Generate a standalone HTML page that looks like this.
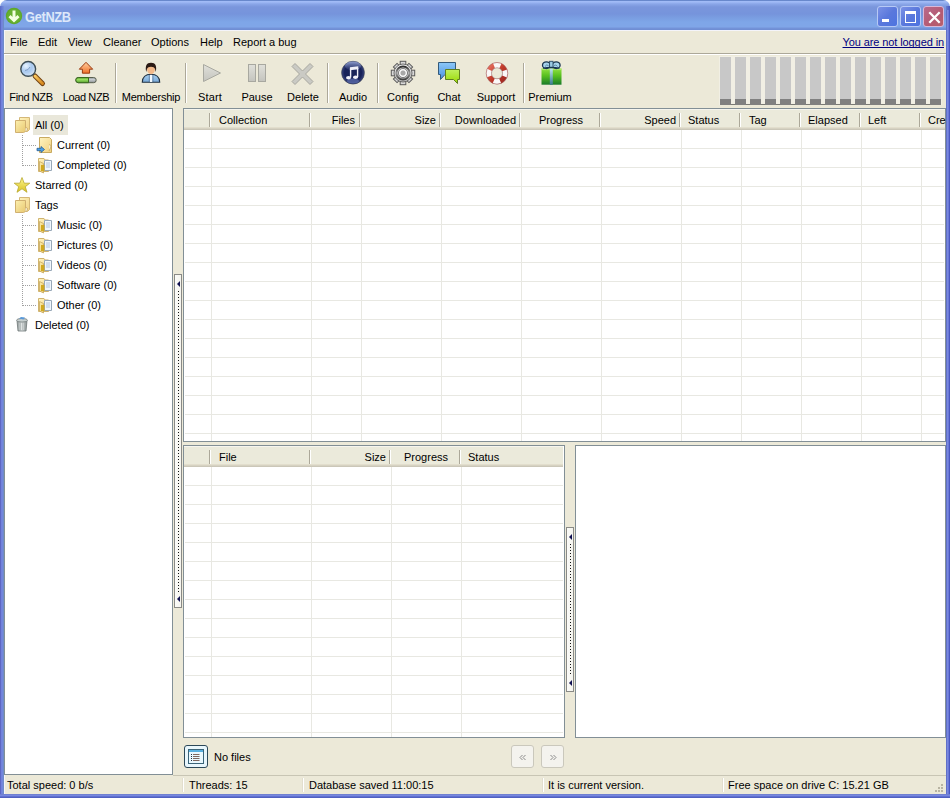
<!DOCTYPE html><html><head><meta charset="utf-8"><style>*{margin:0;padding:0;box-sizing:border-box}
html,body{width:950px;height:798px;overflow:hidden;background:#fff}
body{position:relative;font-family:"Liberation Sans",sans-serif;font-size:11px;color:#000}
.a{position:absolute}
.t{position:absolute;white-space:nowrap;line-height:13px;font-size:11px}
#title{left:0;top:0;width:950px;height:30px;border-radius:7px 7px 0 0;
background:linear-gradient(#6888cc 0px,#6888cc 1px,#a2bcf6 1px,#a0baf6 2px,#8aa6e8 4px,#7a96dc 7px,#7694dc 14px,#7a9ee2 18px,#7ea6e8 22px,#80a6e8 27px,#7494da 28px,#6e8cd2 30px)}
#frameL{left:0;top:10px;width:4px;height:788px;background:linear-gradient(90deg,#5e67c4 0,#5e67c4 1px,#7080dc 1px,#7488dc 3px,#6f8cc8 3px,#6f8cc8 4px)}
#frameR{left:946px;top:10px;width:4px;height:788px;background:linear-gradient(90deg,#6070c8 0,#6070c8 1px,#7888e0 1px,#7888e0 2px,#6a78d8 2px,#6a78d8 3px,#4a58c0 3px)}
#frameB{left:0;top:794px;width:950px;height:4px;background:linear-gradient(#7080d0 0,#7080d0 1px,#7888e0 1px,#7888e0 2px,#6070d0 2px,#6070d0 3px,#5060c0 3px)}
#client{left:4px;top:30px;width:942px;height:764px;background:#ece9d8;border-top:1px solid #f4f4fa;border-left:1px solid #f4f4fa}
.sep{position:absolute;width:2px;top:63px;height:40px;border-left:1px solid #aca899;border-right:1px solid #fff}
.panel{position:absolute;border:1px solid #828f96;background:#fff;overflow:hidden}
.hdr{position:absolute;left:0;top:0;height:21px;background:linear-gradient(#f6f5ee 0px,#f6f5ee 1px,#ebeadb 1px,#ebeadb 18px,#e2decd 18px,#e2decd 19px,#d6d2c2 19px,#d6d2c2 20px,#cbc7b8 20px)}
.hd{position:absolute;top:4px;width:2px;height:14px;border-left:1px solid #aca899;border-right:1px solid #fff}
.gl{position:absolute;width:1px;background:#e8e8e2}
.gh{position:absolute;height:1px;background:#e8e8e2}

.tb{width:21px;height:21px;border:1px solid #b7c9f5;border-radius:3px;background:linear-gradient(135deg,#7b92e6 0%,#5a78dc 50%,#4d74e0 100%)}
.tc{background:linear-gradient(135deg,#b86a8c 0%,#b55a72 60%,#b8606a 100%);border-color:#d9b8d8}
</style></head><body>
<div id="title" class="a"></div>
<div id="client" class="a"></div>
<svg class="a" style="left:5px;top:7px" width="18" height="18" viewBox="0 0 18 18"><circle cx="9" cy="9" r="8.2" fill="#5ea82a"/><circle cx="9" cy="9" r="7" fill="#66b030"/><path d="M9 3.5V13.5M4.5 9.2L9 13.5L13.5 9.2" stroke="#f2ffe0" stroke-width="3" fill="none" stroke-linecap="butt"/></svg>
<div class="a" style="left:946px;top:6px;width:4px;height:24px;background:linear-gradient(90deg,rgba(90,104,200,.55),rgba(64,80,184,.9))"></div>
<div class="a" style="left:0;top:6px;width:4px;height:24px;background:linear-gradient(90deg,rgba(80,96,196,.8),rgba(112,128,220,.3))"></div>
<div class="a" style="left:25px;top:9px;font:bold 14px/17px Liberation Sans,sans-serif;color:#dde8fa;letter-spacing:-0.3px;transform:scaleX(0.91);transform-origin:0 0">GetNZB</div>
<div class="a tb" style="left:877px;top:6px"><div class="a" style="left:4px;top:12px;width:7px;height:3px;background:#fff"></div></div>
<div class="a tb" style="left:900px;top:6px"><div class="a" style="left:4px;top:4px;width:11px;height:12px;border:1px solid #fff;border-top-width:3px"></div></div>
<div class="a tb tc" style="left:923px;top:6px"><svg class="a" style="left:0;top:0" width="21" height="21"><path d="M5.3 5.3L15.7 15.7M15.7 5.3L5.3 15.7" stroke="#fff" stroke-width="2.3"/></svg></div>
<div class="a" style="left:4px;top:53px;width:942px;height:1px;background:#aca899"></div>
<div class="a" style="left:4px;top:54px;width:942px;height:1px;background:#fff"></div>
<div class="t" style="left:10px;top:36px;">File</div>
<div class="t" style="left:38px;top:36px;">Edit</div>
<div class="t" style="left:68px;top:36px;">View</div>
<div class="t" style="left:103px;top:36px;">Cleaner</div>
<div class="t" style="left:151px;top:36px;">Options</div>
<div class="t" style="left:200px;top:36px;">Help</div>
<div class="t" style="left:233px;top:36px;">Report a bug</div>
<div class="t" style="left:744px;width:200px;text-align:right;top:36px;color:#000080;letter-spacing:-0.1px"><u style="text-decoration-skip-ink:none">You are not logged in</u></div>

<svg class="a" style="left:0;top:0" width="600" height="110" viewBox="0 0 600 110">
<defs>
<radialGradient id="lens" cx="0.35" cy="0.3" r="0.8"><stop offset="0" stop-color="#e8f4ff"/><stop offset="0.5" stop-color="#a9c9ef"/><stop offset="1" stop-color="#dbe9f8"/></radialGradient>
<linearGradient id="handle" x1="0" y1="0" x2="1" y2="1"><stop offset="0" stop-color="#f8c860"/><stop offset="1" stop-color="#d88a20"/></linearGradient>
<linearGradient id="arrow" x1="0" y1="0" x2="0" y2="1"><stop offset="0" stop-color="#ffd0a0"/><stop offset="1" stop-color="#f07028"/></linearGradient>
<linearGradient id="gbar" x1="0" y1="0" x2="0" y2="1"><stop offset="0" stop-color="#5aa030"/><stop offset="0.4" stop-color="#98e060"/><stop offset="1" stop-color="#58a030"/></linearGradient>
<linearGradient id="grbar" x1="0" y1="0" x2="0" y2="1"><stop offset="0" stop-color="#909898"/><stop offset="0.4" stop-color="#c8ccd0"/><stop offset="1" stop-color="#8a9090"/></linearGradient>
<linearGradient id="shirt" x1="0" y1="0" x2="0" y2="1"><stop offset="0" stop-color="#a8d0f0"/><stop offset="1" stop-color="#78a8d8"/></linearGradient>
<linearGradient id="dis" x1="0" y1="0" x2="0" y2="1"><stop offset="0" stop-color="#e0e0da"/><stop offset="1" stop-color="#c4c4be"/></linearGradient>
<radialGradient id="audio" cx="0.5" cy="0.5" r="0.5"><stop offset="0" stop-color="#1a2458"/><stop offset="0.75" stop-color="#18225a"/><stop offset="1" stop-color="#3a4680"/></radialGradient>
<linearGradient id="audhi" x1="0" y1="0" x2="0" y2="1"><stop offset="0" stop-color="#a0b0e0" stop-opacity="0.8"/><stop offset="1" stop-color="#a0b0e0" stop-opacity="0"/></linearGradient>
<linearGradient id="gring" x1="0" y1="0" x2="0" y2="1"><stop offset="0" stop-color="#303030"/><stop offset="0.5" stop-color="#9a9a9a"/><stop offset="1" stop-color="#404040"/></linearGradient>
<linearGradient id="gear" x1="0" y1="0" x2="0" y2="1"><stop offset="0" stop-color="#f4f4f4"/><stop offset="1" stop-color="#b8b8b8"/></linearGradient>
<linearGradient id="blueb" x1="0" y1="0" x2="0" y2="1"><stop offset="0" stop-color="#8cc8f8"/><stop offset="1" stop-color="#4a90e0"/></linearGradient>
<linearGradient id="greenb" x1="0" y1="0" x2="0" y2="1"><stop offset="0" stop-color="#c0f060"/><stop offset="1" stop-color="#98d800"/></linearGradient>
<linearGradient id="ribbon" x1="0" y1="0" x2="0" y2="1"><stop offset="0" stop-color="#c0e8f0"/><stop offset="1" stop-color="#3a7890"/></linearGradient>
<linearGradient id="buoy" x1="0" y1="0" x2="1" y2="1"><stop offset="0" stop-color="#e87060"/><stop offset="0.5" stop-color="#c03a2a"/><stop offset="1" stop-color="#a02820"/></linearGradient>
<linearGradient id="gift" x1="0" y1="0" x2="0" y2="1"><stop offset="0" stop-color="#90e040"/><stop offset="0.45" stop-color="#58c020"/><stop offset="1" stop-color="#1a7a2a"/></linearGradient>
</defs>
<!-- magnifier -->
<path d="M35 76L42.5 83.5" stroke="#704010" stroke-width="5" stroke-linecap="round"/>
<path d="M35 76L42.5 83.5" stroke="url(#handle)" stroke-width="3" stroke-linecap="round"/>
<circle cx="28.2" cy="68.9" r="7.4" fill="url(#lens)" stroke="#3e4e56" stroke-width="1.4"/>
<path d="M25 70.5Q28.5 70.5 30 67" stroke="#6c8cb8" stroke-width="0.8" fill="none"/>
<!-- load nzb -->
<path d="M86 62.3L92.7 69.2H89.6V73.2H82.4V69.2H79.3Z" fill="url(#arrow)" stroke="#9a3a10" stroke-width="1" stroke-linejoin="round"/>
<rect x="75.8" y="77.5" width="20.4" height="5.2" rx="2.6" fill="url(#grbar)" stroke="#5a6050" stroke-width="1"/>
<path d="M78.4 77.5H88.5V82.7H78.4A2.6 2.6 0 0 1 78.4 77.5Z" fill="url(#gbar)" stroke="#3a6a20" stroke-width="1"/>
<!-- membership -->
<path d="M142.3 82.3C142.5 77 146 74.3 151 74.3S159.5 77 159.7 82.3Z" fill="url(#shirt)" stroke="#203040" stroke-width="1.1"/>
<rect x="149.8" y="75" width="2.6" height="7" fill="#f0f8ff"/>
<path d="M149.3 74.5V82.3M152.9 74.5V82.3" stroke="#3a5878" stroke-width="0.6"/>
<ellipse cx="151" cy="69.6" rx="3.9" ry="4.6" fill="#f2b98a"/>
<path d="M146.2 72C145 66 146.5 62.8 151 62.8S157 66 155.8 72L155 69C154.5 67.5 153 67 151 66.8C149 67 147.5 67.5 147 69Z" fill="#2a1a14"/>
<!-- start -->
<path d="M203.5 64.5V81.5L220.5 73Z" fill="url(#dis)" stroke="#a8a8a0" stroke-width="1" stroke-linejoin="round"/>
<!-- pause -->
<rect x="248.5" y="64.5" width="7" height="17" fill="url(#dis)" stroke="#a8a8a0"/>
<rect x="258.5" y="64.5" width="7" height="17" fill="url(#dis)" stroke="#a8a8a0"/>
<!-- delete -->
<path d="M295 63.5L302.5 71L310 63.5L313 66.5L305.5 74L313 81.5L310 84.5L302.5 77L295 84.5L292 81.5L299.5 74L292 66.5Z" fill="#cacac4" stroke="#a8a8a0" stroke-width="1" stroke-linejoin="round"/>
<!-- audio -->
<circle cx="353" cy="72.7" r="11.4" fill="url(#audio)" stroke="#303848" stroke-width="0.6"/>
<ellipse cx="353" cy="66" rx="8" ry="4.5" fill="url(#audhi)"/>
<ellipse cx="353" cy="81" rx="6" ry="2.5" fill="#6070b0" opacity="0.7"/>
<path d="M350.6 77.5V68.5M357.6 77V68" stroke="#f0f0f8" stroke-width="1.4" fill="none"/>
<path d="M349.9 67.3L358.3 66.3V69.2L349.9 70.2Z" fill="#f0f0f8"/>
<ellipse cx="348.5" cy="77.7" rx="2.5" ry="1.8" fill="#f0f0f8"/>
<ellipse cx="355.5" cy="77.2" rx="2.5" ry="1.8" fill="#f0f0f8"/>
<!-- config gear -->
<g transform="translate(403 73)">
<g fill="#d8d8d8" stroke="#5a5a5a" stroke-width="1">
<rect x="-2.8" y="-11.7" width="5.6" height="5" />
<rect x="-2.8" y="6.7" width="5.6" height="5" />
<rect x="-11.7" y="-2.8" width="5" height="5.6" />
<rect x="6.7" y="-2.8" width="5" height="5.6" />
<rect x="-2.6" y="-11" width="5.2" height="4.5" transform="rotate(45)"/>
<rect x="-2.6" y="-11" width="5.2" height="4.5" transform="rotate(135)"/>
<rect x="-2.6" y="-11" width="5.2" height="4.5" transform="rotate(225)"/>
<rect x="-2.6" y="-11" width="5.2" height="4.5" transform="rotate(315)"/>
</g>
<circle r="9" fill="url(#gear)" stroke="#5e5e5e" stroke-width="0.9"/>
<circle r="6.6" fill="none" stroke="url(#gring)" stroke-width="2"/>
<circle r="4.6" fill="#e4e4e4" stroke="#6a6a6a" stroke-width="0.8"/>
<circle r="3.3" fill="none" stroke="#ffffff" stroke-width="1"/>
<circle r="2.5" fill="#a8a8a8"/>
</g>
<!-- chat -->
<path d="M438.5 62.5H455.5V74.5H445L440.5 79.5V74.5H438.5Z" fill="url(#blueb)" stroke="#345a7a" stroke-width="1" stroke-linejoin="round"/>
<path d="M445.5 69.5H459.5V79.5H457.5V83.5L453.5 79.5H445.5Z" fill="url(#greenb)" stroke="#5e7e1e" stroke-width="1" stroke-linejoin="round"/>
<!-- support -->
<g transform="translate(497 73.3)">
<circle r="8.2" fill="none" stroke="url(#buoy)" stroke-width="5.3"/>
<circle r="8.2" fill="none" stroke="#fbf8f8" stroke-width="5.3" stroke-dasharray="6.6 6.28" stroke-dashoffset="3.3"/>
<circle r="10.8" fill="none" stroke="#a06060" stroke-width="0.8" opacity="0.75"/>
<circle r="5.5" fill="none" stroke="#a09090" stroke-width="0.8" opacity="0.8"/>
</g>
<!-- premium gift -->
<rect x="541.5" y="68.5" width="20" height="16.2" fill="url(#gift)"/>
<rect x="541.5" y="68.5" width="20" height="1.6" fill="#b0ec70" opacity="0.8"/>
<rect x="549.8" y="68.5" width="3" height="16.2" fill="url(#ribbon)"/>
<ellipse cx="546.4" cy="65.2" rx="3.9" ry="3.3" fill="#a8d4ec" stroke="#1a3650" stroke-width="1.3"/>
<ellipse cx="556.2" cy="65.2" rx="3.9" ry="3.3" fill="#a8d4ec" stroke="#1a3650" stroke-width="1.3"/>
<path d="M545 66.5Q546.5 64 548.5 65.5M557.6 66.5Q556 64 554 65.5" stroke="#4a7a98" stroke-width="0.8" fill="none"/>
<rect x="549.6" y="61.3" width="3.4" height="6.5" fill="#9ccce4" stroke="#2a4a64" stroke-width="0.9"/>
<path d="M543 68.2Q551.3 66.5 559.5 68.2" stroke="#1a3650" stroke-width="1.1" fill="none"/>
</svg>

<div class="sep" style="left:115px"></div>
<div class="sep" style="left:185px"></div>
<div class="sep" style="left:327px"></div>
<div class="sep" style="left:377px"></div>
<div class="sep" style="left:523px"></div>
<div class="t" style="left:-29px;width:120px;text-align:center;top:91px;letter-spacing:-0.4px">Find NZB</div>
<div class="t" style="left:26px;width:120px;text-align:center;top:91px;letter-spacing:-0.4px">Load NZB</div>
<div class="t" style="left:91px;width:120px;text-align:center;top:91px;letter-spacing:-0.2px">Membership</div>
<div class="t" style="left:150px;width:120px;text-align:center;top:91px;letter-spacing:0.2px">Start</div>
<div class="t" style="left:197px;width:120px;text-align:center;top:91px;letter-spacing:0px">Pause</div>
<div class="t" style="left:243px;width:120px;text-align:center;top:91px;letter-spacing:0px">Delete</div>
<div class="t" style="left:293px;width:120px;text-align:center;top:91px;letter-spacing:0px">Audio</div>
<div class="t" style="left:343px;width:120px;text-align:center;top:91px;letter-spacing:0px">Config</div>
<div class="t" style="left:389px;width:120px;text-align:center;top:91px;letter-spacing:0px">Chat</div>
<div class="t" style="left:436px;width:120px;text-align:center;top:91px;letter-spacing:0px">Support</div>
<div class="t" style="left:490px;width:120px;text-align:center;top:91px;letter-spacing:-0.1px">Premium</div>
<div class="a" style="left:719px;top:56px;width:223px;height:49px;background:#f1efe4"></div>
<div class="a" style="left:720px;top:104px;width:221px;height:1px;background:#7a7a74"></div>
<div class="a" style="left:720px;top:57px;width:11px;height:42px;background:#c8c8c8"></div>
<div class="a" style="left:720px;top:99px;width:11px;height:6px;background:#808080"></div>
<div class="a" style="left:735px;top:57px;width:11px;height:42px;background:#c8c8c8"></div>
<div class="a" style="left:735px;top:99px;width:11px;height:6px;background:#808080"></div>
<div class="a" style="left:750px;top:57px;width:11px;height:42px;background:#c8c8c8"></div>
<div class="a" style="left:750px;top:99px;width:11px;height:6px;background:#808080"></div>
<div class="a" style="left:765px;top:57px;width:11px;height:42px;background:#c8c8c8"></div>
<div class="a" style="left:765px;top:99px;width:11px;height:6px;background:#808080"></div>
<div class="a" style="left:780px;top:57px;width:11px;height:42px;background:#c8c8c8"></div>
<div class="a" style="left:780px;top:99px;width:11px;height:6px;background:#808080"></div>
<div class="a" style="left:795px;top:57px;width:11px;height:42px;background:#c8c8c8"></div>
<div class="a" style="left:795px;top:99px;width:11px;height:6px;background:#808080"></div>
<div class="a" style="left:810px;top:57px;width:11px;height:42px;background:#c8c8c8"></div>
<div class="a" style="left:810px;top:99px;width:11px;height:6px;background:#808080"></div>
<div class="a" style="left:825px;top:57px;width:11px;height:42px;background:#c8c8c8"></div>
<div class="a" style="left:825px;top:99px;width:11px;height:6px;background:#808080"></div>
<div class="a" style="left:840px;top:57px;width:11px;height:42px;background:#c8c8c8"></div>
<div class="a" style="left:840px;top:99px;width:11px;height:6px;background:#808080"></div>
<div class="a" style="left:855px;top:57px;width:11px;height:42px;background:#c8c8c8"></div>
<div class="a" style="left:855px;top:99px;width:11px;height:6px;background:#808080"></div>
<div class="a" style="left:870px;top:57px;width:11px;height:42px;background:#c8c8c8"></div>
<div class="a" style="left:870px;top:99px;width:11px;height:6px;background:#808080"></div>
<div class="a" style="left:885px;top:57px;width:11px;height:42px;background:#c8c8c8"></div>
<div class="a" style="left:885px;top:99px;width:11px;height:6px;background:#808080"></div>
<div class="a" style="left:900px;top:57px;width:11px;height:42px;background:#c8c8c8"></div>
<div class="a" style="left:900px;top:99px;width:11px;height:6px;background:#808080"></div>
<div class="a" style="left:915px;top:57px;width:11px;height:42px;background:#c8c8c8"></div>
<div class="a" style="left:915px;top:99px;width:11px;height:6px;background:#808080"></div>
<div class="a" style="left:930px;top:57px;width:11px;height:42px;background:#c8c8c8"></div>
<div class="a" style="left:930px;top:99px;width:11px;height:6px;background:#808080"></div>
<div class="panel" style="left:4px;top:108px;width:169px;height:667px"></div>
<div class="a" style="left:33px;top:115px;width:35px;height:20px;background:#e9e7da"></div>

<svg class="a" style="left:0;top:100px" width="180" height="240" viewBox="0 100 180 240">
<defs>
<linearGradient id="fold" x1="0" y1="0" x2="1" y2="1"><stop offset="0" stop-color="#fdf0b0"/><stop offset="1" stop-color="#e8c870"/></linearGradient>
<linearGradient id="fold2" x1="0" y1="0" x2="1" y2="1"><stop offset="0" stop-color="#fff4c0"/><stop offset="1" stop-color="#f0d080"/></linearGradient>
<linearGradient id="star" x1="0" y1="0" x2="0" y2="1"><stop offset="0" stop-color="#fff890"/><stop offset="1" stop-color="#d8c020"/></linearGradient>
<linearGradient id="trash" x1="0" y1="0" x2="1" y2="0"><stop offset="0" stop-color="#909898"/><stop offset="0.5" stop-color="#e8ecec"/><stop offset="1" stop-color="#808888"/></linearGradient>
<g id="docs">
<path d="M0.5 1.5H6L7 3H10.5V14.5H0.5Z" fill="url(#fold2)" stroke="#d0b470" stroke-width="1"/>
<path d="M6.5 3.5H13.5V13.5H6.5Z" fill="#f0f6fc" stroke="#98a8b8" stroke-width="1"/>
<path d="M8 6H12M8 8H12M8 10H12" stroke="#a8c0dc" stroke-width="0.9"/>
<path d="M1.5 4.5L5.5 6.5V16L1.5 14Z" fill="url(#fold)" stroke="#c8a860" stroke-width="0.8"/>
<rect x="3" y="8" width="3.5" height="6" fill="#d0a820"/>
</g>
<g id="stack">
<path d="M4.5 0.5H14.5V12.5L12.5 14.5H4.5Z" fill="url(#fold2)" stroke="#d4b878" stroke-width="1"/>
<path d="M0.5 3.5H10.5V14.5L8.5 15.5H0.5Z" fill="url(#fold)" stroke="#d0b070" stroke-width="1"/>
<path d="M10.5 11C12 10 13 11.5 12 13.5L10.5 15" fill="#f8f0d0" stroke="#c0a060" stroke-width="0.8"/>
</g>
</defs>
<!-- dotted tree lines -->
<path d="M22.5 135V166M22.5 215V306M23 145.5H37M23 165.5H37M23 225.5H37M23 245.5H37M23 265.5H37M23 285.5H37M23 305.5H37" stroke="#a0a0a0" stroke-width="1" stroke-dasharray="1 1"/>
<use href="#stack" x="15" y="117"/>
<use href="#stack" x="15" y="197"/>
<!-- current -->
<path d="M39.5 137.5H49.5L51.5 139.5V152.5H39.5Z" fill="url(#fold2)" stroke="#c8aa60" stroke-width="1"/>
<path d="M49 145C50.5 144 51.5 146 50.5 148L49 151" fill="#f8f0d0" stroke="#c0a060" stroke-width="0.8"/>
<path d="M37 148.3H41V146.5L44.5 149.5L41 152.5V150.7H37Z" fill="#4aa0e8" stroke="#2a5e90" stroke-width="0.8" stroke-linejoin="round"/>
<use href="#docs" x="38" y="157"/>
<use href="#docs" x="38" y="217"/>
<use href="#docs" x="38" y="237"/>
<use href="#docs" x="38" y="257"/>
<use href="#docs" x="38" y="277"/>
<use href="#docs" x="38" y="297"/>
<!-- star -->
<path d="M22 177.5L24.2 183.2H29.8L25.3 186.7L27 192.3L22 188.8L17 192.3L18.7 186.7L14.2 183.2H19.8Z" fill="url(#star)" stroke="#b8a830" stroke-width="0.8" stroke-linejoin="round"/>
<!-- trash -->
<path d="M17 320.5H27L26 331H18Z" fill="url(#trash)" stroke="#707878" stroke-width="0.8"/>
<path d="M18.5 322.5V330M20.5 322.5V330M22.5 322.5V330M24.5 322.5V330" stroke="#a0a8a8" stroke-width="0.5"/>
<ellipse cx="22" cy="320.3" rx="5.5" ry="1.8" fill="#c8d0d0" stroke="#707878" stroke-width="0.8"/>
<path d="M19 318.5L21 317L25 317.5L23.5 319.5Z" fill="#5898d8"/>
</svg>

<div class="t" style="left:35px;top:119px;">All (0)</div>
<div class="t" style="left:57px;top:139px;">Current (0)</div>
<div class="t" style="left:57px;top:159px;">Completed (0)</div>
<div class="t" style="left:35px;top:179px;">Starred (0)</div>
<div class="t" style="left:35px;top:199px;">Tags</div>
<div class="t" style="left:57px;top:219px;">Music (0)</div>
<div class="t" style="left:57px;top:239px;">Pictures (0)</div>
<div class="t" style="left:57px;top:259px;">Videos (0)</div>
<div class="t" style="left:57px;top:279px;">Software (0)</div>
<div class="t" style="left:57px;top:299px;">Other (0)</div>
<div class="t" style="left:35px;top:319px;">Deleted (0)</div>
<div class="panel" style="left:183px;top:108px;width:763px;height:334px">
<div class="hdr" style="width:761px"></div>
<div class="hd" style="left:25px"></div>
<div class="hd" style="left:125px"></div>
<div class="hd" style="left:175px"></div>
<div class="hd" style="left:255px"></div>
<div class="hd" style="left:335px"></div>
<div class="hd" style="left:415px"></div>
<div class="hd" style="left:495px"></div>
<div class="hd" style="left:555px"></div>
<div class="hd" style="left:615px"></div>
<div class="hd" style="left:675px"></div>
<div class="hd" style="left:735px"></div>
<div class="gl" style="left:27px;top:21px;height:320px"></div>
<div class="gl" style="left:127px;top:21px;height:320px"></div>
<div class="gl" style="left:177px;top:21px;height:320px"></div>
<div class="gl" style="left:257px;top:21px;height:320px"></div>
<div class="gl" style="left:337px;top:21px;height:320px"></div>
<div class="gl" style="left:417px;top:21px;height:320px"></div>
<div class="gl" style="left:497px;top:21px;height:320px"></div>
<div class="gl" style="left:557px;top:21px;height:320px"></div>
<div class="gl" style="left:617px;top:21px;height:320px"></div>
<div class="gl" style="left:677px;top:21px;height:320px"></div>
<div class="gl" style="left:737px;top:21px;height:320px"></div>
<div class="gh" style="left:1px;top:39px;width:759px"></div>
<div class="gh" style="left:1px;top:58px;width:759px"></div>
<div class="gh" style="left:1px;top:77px;width:759px"></div>
<div class="gh" style="left:1px;top:96px;width:759px"></div>
<div class="gh" style="left:1px;top:115px;width:759px"></div>
<div class="gh" style="left:1px;top:134px;width:759px"></div>
<div class="gh" style="left:1px;top:153px;width:759px"></div>
<div class="gh" style="left:1px;top:172px;width:759px"></div>
<div class="gh" style="left:1px;top:191px;width:759px"></div>
<div class="gh" style="left:1px;top:210px;width:759px"></div>
<div class="gh" style="left:1px;top:229px;width:759px"></div>
<div class="gh" style="left:1px;top:248px;width:759px"></div>
<div class="gh" style="left:1px;top:267px;width:759px"></div>
<div class="gh" style="left:1px;top:286px;width:759px"></div>
<div class="gh" style="left:1px;top:305px;width:759px"></div>
<div class="gh" style="left:1px;top:324px;width:759px"></div>
</div>
<div class="t" style="left:219px;top:114px;">Collection</div>
<div class="t" style="left:688px;top:114px;">Status</div>
<div class="t" style="left:749px;top:114px;">Tag</div>
<div class="t" style="left:808px;top:114px;">Elapsed</div>
<div class="t" style="left:868px;top:114px;">Left</div>
<div class="t" style="left:928px;top:114px;">Created</div>
<div class="t" style="left:155px;width:200px;text-align:right;top:114px;">Files</div>
<div class="t" style="left:236px;width:200px;text-align:right;top:114px;">Size</div>
<div class="t" style="left:316px;width:200px;text-align:right;top:114px;">Downloaded</div>
<div class="t" style="left:476px;width:200px;text-align:right;top:114px;">Speed</div>
<div class="t" style="left:501px;width:120px;text-align:center;top:114px;">Progress</div>
<div class="panel" style="left:183px;top:445px;width:382px;height:293px">
<div class="hdr" style="width:379px"></div>
<div class="hd" style="left:25px"></div>
<div class="hd" style="left:125px"></div>
<div class="hd" style="left:205px"></div>
<div class="hd" style="left:275px"></div>
<div class="gl" style="left:27px;top:21px;height:280px"></div>
<div class="gl" style="left:127px;top:21px;height:280px"></div>
<div class="gl" style="left:207px;top:21px;height:280px"></div>
<div class="gl" style="left:277px;top:21px;height:280px"></div>
<div class="gh" style="left:1px;top:39px;width:378px"></div>
<div class="gh" style="left:1px;top:58px;width:378px"></div>
<div class="gh" style="left:1px;top:77px;width:378px"></div>
<div class="gh" style="left:1px;top:96px;width:378px"></div>
<div class="gh" style="left:1px;top:115px;width:378px"></div>
<div class="gh" style="left:1px;top:134px;width:378px"></div>
<div class="gh" style="left:1px;top:153px;width:378px"></div>
<div class="gh" style="left:1px;top:172px;width:378px"></div>
<div class="gh" style="left:1px;top:191px;width:378px"></div>
<div class="gh" style="left:1px;top:210px;width:378px"></div>
<div class="gh" style="left:1px;top:229px;width:378px"></div>
<div class="gh" style="left:1px;top:248px;width:378px"></div>
<div class="gh" style="left:1px;top:267px;width:378px"></div>
<div class="gh" style="left:1px;top:286px;width:378px"></div>
</div>
<div class="t" style="left:219px;top:451px;">File</div>
<div class="t" style="left:186px;width:200px;text-align:right;top:451px;">Size</div>
<div class="t" style="left:366px;width:120px;text-align:center;top:451px;">Progress</div>
<div class="t" style="left:468px;top:451px;">Status</div>
<div class="panel" style="left:575px;top:445px;width:371px;height:293px"></div>
<div class="t" style="left:7px;top:779px;">Total speed: 0 b/s</div>
<div class="t" style="left:189px;top:779px;">Threads: 15</div>
<div class="t" style="left:309px;top:779px;">Database saved 11:00:15</div>
<div class="t" style="left:548px;top:779px;">It is current version.</div>
<div class="t" style="left:728px;top:779px;">Free space on drive C: 15.21 GB</div>
<div class="t" style="left:214px;top:751px;">No files</div>
<div class="a" style="left:174px;top:274px;width:8px;height:334px;border:1px solid #8a8a86;background:linear-gradient(90deg,#fbfbf8,#f4f4ee)"></div>
<svg class="a" style="left:177px;top:281px" width="3" height="6"><path d="M3 0V6L0 3Z" fill="#101050"/></svg>
<svg class="a" style="left:177px;top:596px" width="3" height="6"><path d="M3 0V6L0 3Z" fill="#101050"/></svg>
<svg class="a" style="left:178px;top:291px" width="1" height="303"><rect x="0" y="0" width="1" height="1" fill="#101010"/><rect x="0" y="3" width="1" height="1" fill="#101010"/><rect x="0" y="6" width="1" height="1" fill="#101010"/><rect x="0" y="9" width="1" height="1" fill="#101010"/><rect x="0" y="12" width="1" height="1" fill="#101010"/><rect x="0" y="15" width="1" height="1" fill="#101010"/><rect x="0" y="18" width="1" height="1" fill="#101010"/><rect x="0" y="21" width="1" height="1" fill="#101010"/><rect x="0" y="24" width="1" height="1" fill="#101010"/><rect x="0" y="27" width="1" height="1" fill="#101010"/><rect x="0" y="30" width="1" height="1" fill="#101010"/><rect x="0" y="33" width="1" height="1" fill="#101010"/><rect x="0" y="36" width="1" height="1" fill="#101010"/><rect x="0" y="39" width="1" height="1" fill="#101010"/><rect x="0" y="42" width="1" height="1" fill="#101010"/><rect x="0" y="45" width="1" height="1" fill="#101010"/><rect x="0" y="48" width="1" height="1" fill="#101010"/><rect x="0" y="51" width="1" height="1" fill="#101010"/><rect x="0" y="54" width="1" height="1" fill="#101010"/><rect x="0" y="57" width="1" height="1" fill="#101010"/><rect x="0" y="60" width="1" height="1" fill="#101010"/><rect x="0" y="63" width="1" height="1" fill="#101010"/><rect x="0" y="66" width="1" height="1" fill="#101010"/><rect x="0" y="69" width="1" height="1" fill="#101010"/><rect x="0" y="72" width="1" height="1" fill="#101010"/><rect x="0" y="75" width="1" height="1" fill="#101010"/><rect x="0" y="78" width="1" height="1" fill="#101010"/><rect x="0" y="81" width="1" height="1" fill="#101010"/><rect x="0" y="84" width="1" height="1" fill="#101010"/><rect x="0" y="87" width="1" height="1" fill="#101010"/><rect x="0" y="90" width="1" height="1" fill="#101010"/><rect x="0" y="93" width="1" height="1" fill="#101010"/><rect x="0" y="96" width="1" height="1" fill="#101010"/><rect x="0" y="99" width="1" height="1" fill="#101010"/><rect x="0" y="102" width="1" height="1" fill="#101010"/><rect x="0" y="105" width="1" height="1" fill="#101010"/><rect x="0" y="108" width="1" height="1" fill="#101010"/><rect x="0" y="111" width="1" height="1" fill="#101010"/><rect x="0" y="114" width="1" height="1" fill="#101010"/><rect x="0" y="117" width="1" height="1" fill="#101010"/><rect x="0" y="120" width="1" height="1" fill="#101010"/><rect x="0" y="123" width="1" height="1" fill="#101010"/><rect x="0" y="126" width="1" height="1" fill="#101010"/><rect x="0" y="129" width="1" height="1" fill="#101010"/><rect x="0" y="132" width="1" height="1" fill="#101010"/><rect x="0" y="135" width="1" height="1" fill="#101010"/><rect x="0" y="138" width="1" height="1" fill="#101010"/><rect x="0" y="141" width="1" height="1" fill="#101010"/><rect x="0" y="144" width="1" height="1" fill="#101010"/><rect x="0" y="147" width="1" height="1" fill="#101010"/><rect x="0" y="150" width="1" height="1" fill="#101010"/><rect x="0" y="153" width="1" height="1" fill="#101010"/><rect x="0" y="156" width="1" height="1" fill="#101010"/><rect x="0" y="159" width="1" height="1" fill="#101010"/><rect x="0" y="162" width="1" height="1" fill="#101010"/><rect x="0" y="165" width="1" height="1" fill="#101010"/><rect x="0" y="168" width="1" height="1" fill="#101010"/><rect x="0" y="171" width="1" height="1" fill="#101010"/><rect x="0" y="174" width="1" height="1" fill="#101010"/><rect x="0" y="177" width="1" height="1" fill="#101010"/><rect x="0" y="180" width="1" height="1" fill="#101010"/><rect x="0" y="183" width="1" height="1" fill="#101010"/><rect x="0" y="186" width="1" height="1" fill="#101010"/><rect x="0" y="189" width="1" height="1" fill="#101010"/><rect x="0" y="192" width="1" height="1" fill="#101010"/><rect x="0" y="195" width="1" height="1" fill="#101010"/><rect x="0" y="198" width="1" height="1" fill="#101010"/><rect x="0" y="201" width="1" height="1" fill="#101010"/><rect x="0" y="204" width="1" height="1" fill="#101010"/><rect x="0" y="207" width="1" height="1" fill="#101010"/><rect x="0" y="210" width="1" height="1" fill="#101010"/><rect x="0" y="213" width="1" height="1" fill="#101010"/><rect x="0" y="216" width="1" height="1" fill="#101010"/><rect x="0" y="219" width="1" height="1" fill="#101010"/><rect x="0" y="222" width="1" height="1" fill="#101010"/><rect x="0" y="225" width="1" height="1" fill="#101010"/><rect x="0" y="228" width="1" height="1" fill="#101010"/><rect x="0" y="231" width="1" height="1" fill="#101010"/><rect x="0" y="234" width="1" height="1" fill="#101010"/><rect x="0" y="237" width="1" height="1" fill="#101010"/><rect x="0" y="240" width="1" height="1" fill="#101010"/><rect x="0" y="243" width="1" height="1" fill="#101010"/><rect x="0" y="246" width="1" height="1" fill="#101010"/><rect x="0" y="249" width="1" height="1" fill="#101010"/><rect x="0" y="252" width="1" height="1" fill="#101010"/><rect x="0" y="255" width="1" height="1" fill="#101010"/><rect x="0" y="258" width="1" height="1" fill="#101010"/><rect x="0" y="261" width="1" height="1" fill="#101010"/><rect x="0" y="264" width="1" height="1" fill="#101010"/><rect x="0" y="267" width="1" height="1" fill="#101010"/><rect x="0" y="270" width="1" height="1" fill="#101010"/><rect x="0" y="273" width="1" height="1" fill="#101010"/><rect x="0" y="276" width="1" height="1" fill="#101010"/><rect x="0" y="279" width="1" height="1" fill="#101010"/><rect x="0" y="282" width="1" height="1" fill="#101010"/><rect x="0" y="285" width="1" height="1" fill="#101010"/><rect x="0" y="288" width="1" height="1" fill="#101010"/><rect x="0" y="291" width="1" height="1" fill="#101010"/><rect x="0" y="294" width="1" height="1" fill="#101010"/><rect x="0" y="297" width="1" height="1" fill="#101010"/><rect x="0" y="300" width="1" height="1" fill="#101010"/></svg>
<div class="a" style="left:566px;top:527px;width:8px;height:165px;border:1px solid #8a8a86;background:linear-gradient(90deg,#fbfbf8,#f4f4ee)"></div>
<svg class="a" style="left:569px;top:534px" width="3" height="6"><path d="M3 0V6L0 3Z" fill="#101050"/></svg>
<svg class="a" style="left:569px;top:680px" width="3" height="6"><path d="M3 0V6L0 3Z" fill="#101050"/></svg>
<svg class="a" style="left:570px;top:544px" width="1" height="132"><rect x="0" y="0" width="1" height="1" fill="#101010"/><rect x="0" y="3" width="1" height="1" fill="#101010"/><rect x="0" y="6" width="1" height="1" fill="#101010"/><rect x="0" y="9" width="1" height="1" fill="#101010"/><rect x="0" y="12" width="1" height="1" fill="#101010"/><rect x="0" y="15" width="1" height="1" fill="#101010"/><rect x="0" y="18" width="1" height="1" fill="#101010"/><rect x="0" y="21" width="1" height="1" fill="#101010"/><rect x="0" y="24" width="1" height="1" fill="#101010"/><rect x="0" y="27" width="1" height="1" fill="#101010"/><rect x="0" y="30" width="1" height="1" fill="#101010"/><rect x="0" y="33" width="1" height="1" fill="#101010"/><rect x="0" y="36" width="1" height="1" fill="#101010"/><rect x="0" y="39" width="1" height="1" fill="#101010"/><rect x="0" y="42" width="1" height="1" fill="#101010"/><rect x="0" y="45" width="1" height="1" fill="#101010"/><rect x="0" y="48" width="1" height="1" fill="#101010"/><rect x="0" y="51" width="1" height="1" fill="#101010"/><rect x="0" y="54" width="1" height="1" fill="#101010"/><rect x="0" y="57" width="1" height="1" fill="#101010"/><rect x="0" y="60" width="1" height="1" fill="#101010"/><rect x="0" y="63" width="1" height="1" fill="#101010"/><rect x="0" y="66" width="1" height="1" fill="#101010"/><rect x="0" y="69" width="1" height="1" fill="#101010"/><rect x="0" y="72" width="1" height="1" fill="#101010"/><rect x="0" y="75" width="1" height="1" fill="#101010"/><rect x="0" y="78" width="1" height="1" fill="#101010"/><rect x="0" y="81" width="1" height="1" fill="#101010"/><rect x="0" y="84" width="1" height="1" fill="#101010"/><rect x="0" y="87" width="1" height="1" fill="#101010"/><rect x="0" y="90" width="1" height="1" fill="#101010"/><rect x="0" y="93" width="1" height="1" fill="#101010"/><rect x="0" y="96" width="1" height="1" fill="#101010"/><rect x="0" y="99" width="1" height="1" fill="#101010"/><rect x="0" y="102" width="1" height="1" fill="#101010"/><rect x="0" y="105" width="1" height="1" fill="#101010"/><rect x="0" y="108" width="1" height="1" fill="#101010"/><rect x="0" y="111" width="1" height="1" fill="#101010"/><rect x="0" y="114" width="1" height="1" fill="#101010"/><rect x="0" y="117" width="1" height="1" fill="#101010"/><rect x="0" y="120" width="1" height="1" fill="#101010"/><rect x="0" y="123" width="1" height="1" fill="#101010"/><rect x="0" y="126" width="1" height="1" fill="#101010"/><rect x="0" y="129" width="1" height="1" fill="#101010"/></svg>
<div class="a" style="left:184px;top:745px;width:24px;height:23px;border:1px solid #2c4858;border-radius:3px;background:#e8f6fc"></div>
<svg class="a" style="left:184px;top:745px" width="24" height="23"><rect x="4.5" y="4.5" width="15" height="14" fill="#eaf8fe" stroke="#3a6478" stroke-width="1"/><rect x="5" y="5" width="14" height="2" fill="#58b0e0"/><path d="M7 9.5H8M7 11.5H8M7 13.5H8M7 15.5H8" stroke="#203040" stroke-width="1.2"/><path d="M9 9.5H15.5M9 11.5H15.5M9 13.5H15.5M9 15.5H15.5" stroke="#806860" stroke-width="1"/></svg>
<div class="a" style="left:511px;top:745px;width:23px;height:23px;border:1px solid #cac8bc;border-radius:3px;background:#f4f3ee"></div>
<svg class="a" style="left:517px;top:754px" width="12" height="7"><path d="M5.5 1L3 3.5L5.5 6M8.5 1L6 3.5L8.5 6" stroke="#8a8a8a" stroke-width="1" fill="none"/></svg>
<div class="a" style="left:541px;top:745px;width:23px;height:23px;border:1px solid #cac8bc;border-radius:3px;background:#f4f3ee"></div>
<svg class="a" style="left:547px;top:754px" width="12" height="7"><path d="M3.5 1L6 3.5L3.5 6M6.5 1L9 3.5L6.5 6" stroke="#8a8a8a" stroke-width="1" fill="none"/></svg>
<div class="a" style="left:182px;top:778px;width:1px;height:14px;background:#e2dece"></div>
<div class="a" style="left:183px;top:778px;width:1px;height:14px;background:#fff"></div>
<div class="a" style="left:302px;top:778px;width:1px;height:14px;background:#e2dece"></div>
<div class="a" style="left:303px;top:778px;width:1px;height:14px;background:#fff"></div>
<div class="a" style="left:542px;top:778px;width:1px;height:14px;background:#e2dece"></div>
<div class="a" style="left:543px;top:778px;width:1px;height:14px;background:#fff"></div>
<div class="a" style="left:722px;top:778px;width:1px;height:14px;background:#e2dece"></div>
<div class="a" style="left:723px;top:778px;width:1px;height:14px;background:#fff"></div>
<div class="a" style="left:173px;top:775px;width:773px;height:1px;background:#c8c5b4"></div>
<div class="a" style="left:941px;top:790px;width:2px;height:2px;background:#b8b4a2"></div>
<div class="a" style="left:938px;top:790px;width:2px;height:2px;background:#b8b4a2"></div>
<div class="a" style="left:935px;top:790px;width:2px;height:2px;background:#b8b4a2"></div>
<div class="a" style="left:941px;top:787px;width:2px;height:2px;background:#b8b4a2"></div>
<div class="a" style="left:938px;top:787px;width:2px;height:2px;background:#b8b4a2"></div>
<div class="a" style="left:941px;top:784px;width:2px;height:2px;background:#b8b4a2"></div>
<div id="frameL" class="a"></div><div id="frameR" class="a"></div><div id="frameB" class="a"></div>
</body></html>
